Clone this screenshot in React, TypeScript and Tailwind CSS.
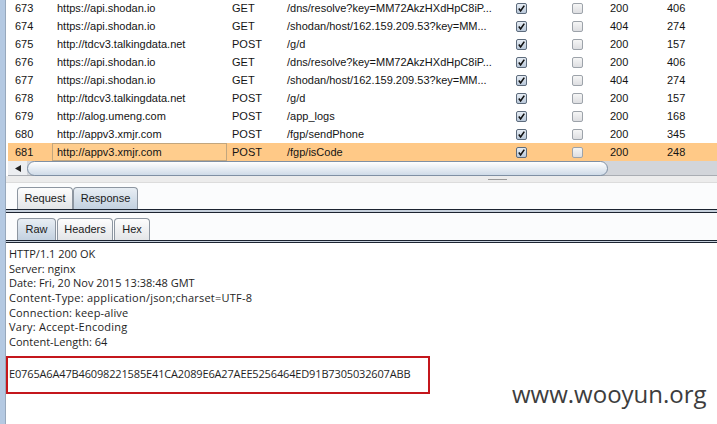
import React from "react";

const rows: string[][] = [
  ["673", "https://api.shodan.io", "GET", "/dns/resolve?key=MM72AkzHXdHpC8iP...", "200", "406"],
  ["674", "https://api.shodan.io", "GET", "/shodan/host/162.159.209.53?key=MM...", "404", "274"],
  ["675", "http://tdcv3.talkingdata.net", "POST", "/g/d", "200", "157"],
  ["676", "https://api.shodan.io", "GET", "/dns/resolve?key=MM72AkzHXdHpC8iP...", "200", "406"],
  ["677", "https://api.shodan.io", "GET", "/shodan/host/162.159.209.53?key=MM...", "404", "274"],
  ["678", "http://tdcv3.talkingdata.net", "POST", "/g/d", "200", "157"],
  ["679", "http://alog.umeng.com", "POST", "/app_logs", "200", "168"],
  ["680", "http://appv3.xmjr.com", "POST", "/fgp/sendPhone", "200", "345"],
  ["681", "http://appv3.xmjr.com", "POST", "/fgp/isCode", "200", "248"],
];

function Checked() {
  return (
    <svg width="11" height="11" viewBox="0 0 11 11">
      <defs>
        <linearGradient id="cg" x1="0" y1="0" x2="0" y2="1">
          <stop offset="0" stopColor="#e9eff6" />
          <stop offset="1" stopColor="#b7c6d8" />
        </linearGradient>
      </defs>
      <rect x="0.5" y="0.5" width="10" height="10" rx="1.5" fill="url(#cg)" stroke="#5d6b7c" />
      <path d="M2.8 5.6 L4.6 8 L8.3 2.6" fill="none" stroke="#111" strokeWidth="1.6" />
    </svg>
  );
}

function Unchecked() {
  return (
    <svg width="11" height="11" viewBox="0 0 11 11">
      <defs>
        <linearGradient id="ug" x1="0" y1="0" x2="0" y2="1">
          <stop offset="0" stopColor="#f7f7f7" />
          <stop offset="1" stopColor="#dcdde0" />
        </linearGradient>
      </defs>
      <rect x="0.5" y="0.5" width="10" height="10" rx="1.5" fill="url(#ug)" stroke="#9da3aa" />
    </svg>
  );
}

function Row({ r, sel }: { r: string[]; sel: boolean }) {
  return (
    <div className={sel ? "flex h-[18px] items-center bg-[#ffc987]" : "flex h-[18px] items-center"}>
      <div className="w-[44px] pl-[7px]">{r[0]}</div>
      {sel ? (
        <div className="w-[175px] h-[18px] flex items-center pl-[4px] border border-[#c2a67e] bg-[#ffcd8d]">{r[1]}</div>
      ) : (
        <div className="w-[175px] pl-[5px]">{r[1]}</div>
      )}
      <div className="w-[55px] pl-[5px]">{r[2]}</div>
      <div className="w-[228px] pl-[5px] whitespace-nowrap overflow-hidden">{r[3]}</div>
      <div className="w-[56px] pl-[6px] flex items-center">
        <Checked />
      </div>
      <div className="w-[38px] pl-[6px] flex items-center">
        <Unchecked />
      </div>
      <div className="w-[57px] pl-[6px]">{r[4]}</div>
      <div className="flex-1 pl-[6px]">{r[5]}</div>
    </div>
  );
}

function Tab({ label, active, cls }: { label: string; active: boolean; cls: string }) {
  const base =
    "h-[22px] flex items-center justify-center rounded-t-[4px] border border-b-0 border-[#8d96a1] text-[11px] text-[#1a1a1a] ";
  const bg = active
    ? "bg-gradient-to-b from-[#e8eef4] to-[#c3d1e0] "
    : "bg-gradient-to-b from-[#fdfdfd] to-[#e3e5e8] ";
  return <div className={base + bg + cls}>{label}</div>;
}

export default function App() {
  return (
    <div className="w-[717px] h-[424px] relative overflow-hidden bg-white flex font-['Liberation_Sans',Arial,sans-serif]">
      <div className="w-[5px] h-full bg-[#b4c9e2] border-r border-[#97a8bc] box-content" />
      <div className="flex-1 flex flex-col bg-[#fbfcfd]">
        {/* table */}
        <div className="pl-[2px] bg-white">
          <div className="mt-[-1px] text-[11px] text-[#141414]">
            {rows.map((r, i) => (
              <Row key={r[0]} r={r} sel={i === 8} />
            ))}
          </div>
          {/* horizontal scrollbar */}
          <div className="flex h-[15px] bg-[#d2d5da] border-b border-[#a9adb3]">
            <div className="w-[19px] bg-[#eceef1] flex items-center pl-[7px]">
              <svg width="6" height="7" viewBox="0 0 6 7">
                <path d="M0 3.5 L6 0 L6 7 Z" fill="#222" />
              </svg>
            </div>
            <div className="w-[581px] h-[15px] rounded-l-[9px] rounded-r-[9px] border border-[#7f90a4] bg-gradient-to-b from-[#ffffff] to-[#cfdbe8]" />
          </div>
        </div>
        {/* splitter */}
        <div className="h-[7px] bg-[#ececec] border-b border-[#dcdcdc] flex justify-start">
          <div className="ml-[482px] mt-[3px] w-[19px] h-px bg-[#9a9a9a]" />
        </div>
        {/* tab row 1 */}
        <div className="mt-[4px] flex items-end pl-[11px] h-[22px]">
          <Tab label="Request" active={false} cls="w-[56px]" />
          <Tab label="Response" active={true} cls="w-[65px]" />
        </div>
        <div className="h-px bg-[#1c2431]" />
        <div className="h-[2px] bg-[#c6d0dc]" />
        <div className="h-px bg-[#1c2431]" />
        {/* tab row 2 */}
        <div className="mt-[5px] flex items-end pl-[11px] h-[22px] gap-[1px]">
          <Tab label="Raw" active={true} cls="w-[39px]" />
          <Tab label="Headers" active={false} cls="w-[56px]" />
          <Tab label="Hex" active={false} cls="w-[36px]" />
        </div>
        <div className="h-px bg-[#1c2431]" />
        <div className="h-px bg-[#c6d0dc]" />
        <div className="h-px bg-[#1c2431]" />
        {/* response body */}
        <div className="flex-1 bg-white pt-[4px] pl-[3px] font-['Open_Sans',sans-serif] text-[11px] leading-[14.67px] text-[#1e1e1e]">
          <div>HTTP/1.1 200 OK</div>
          <div>Server: nginx</div>
          <div>Date: Fri, 20 Nov 2015 13:38:48 GMT</div>
          <div className="tracking-[0.22px]">Content-Type: application/json;charset=UTF-8</div>
          <div className="tracking-[0.15px]">Connection: keep-alive</div>
          <div className="tracking-[0.25px]">Vary: Accept-Encoding</div>
          <div>Content-Length: 64</div>
          <div className="mt-[6px] ml-[-3px] w-[424px] h-[38px] border-2 border-[#c4161c] pt-[9px] pl-[1px] tracking-[-0.15px]">
            E0765A6A47B46098221585E41CA2089E6A27AEE5256464ED91B7305032607ABB
          </div>
        </div>
      </div>
      <div className="absolute left-[512px] top-[382px] font-['Open_Sans',sans-serif] text-[24px] leading-none text-[#3d3d3d]">
        www.wooyun.org
      </div>
    </div>
  );
}
